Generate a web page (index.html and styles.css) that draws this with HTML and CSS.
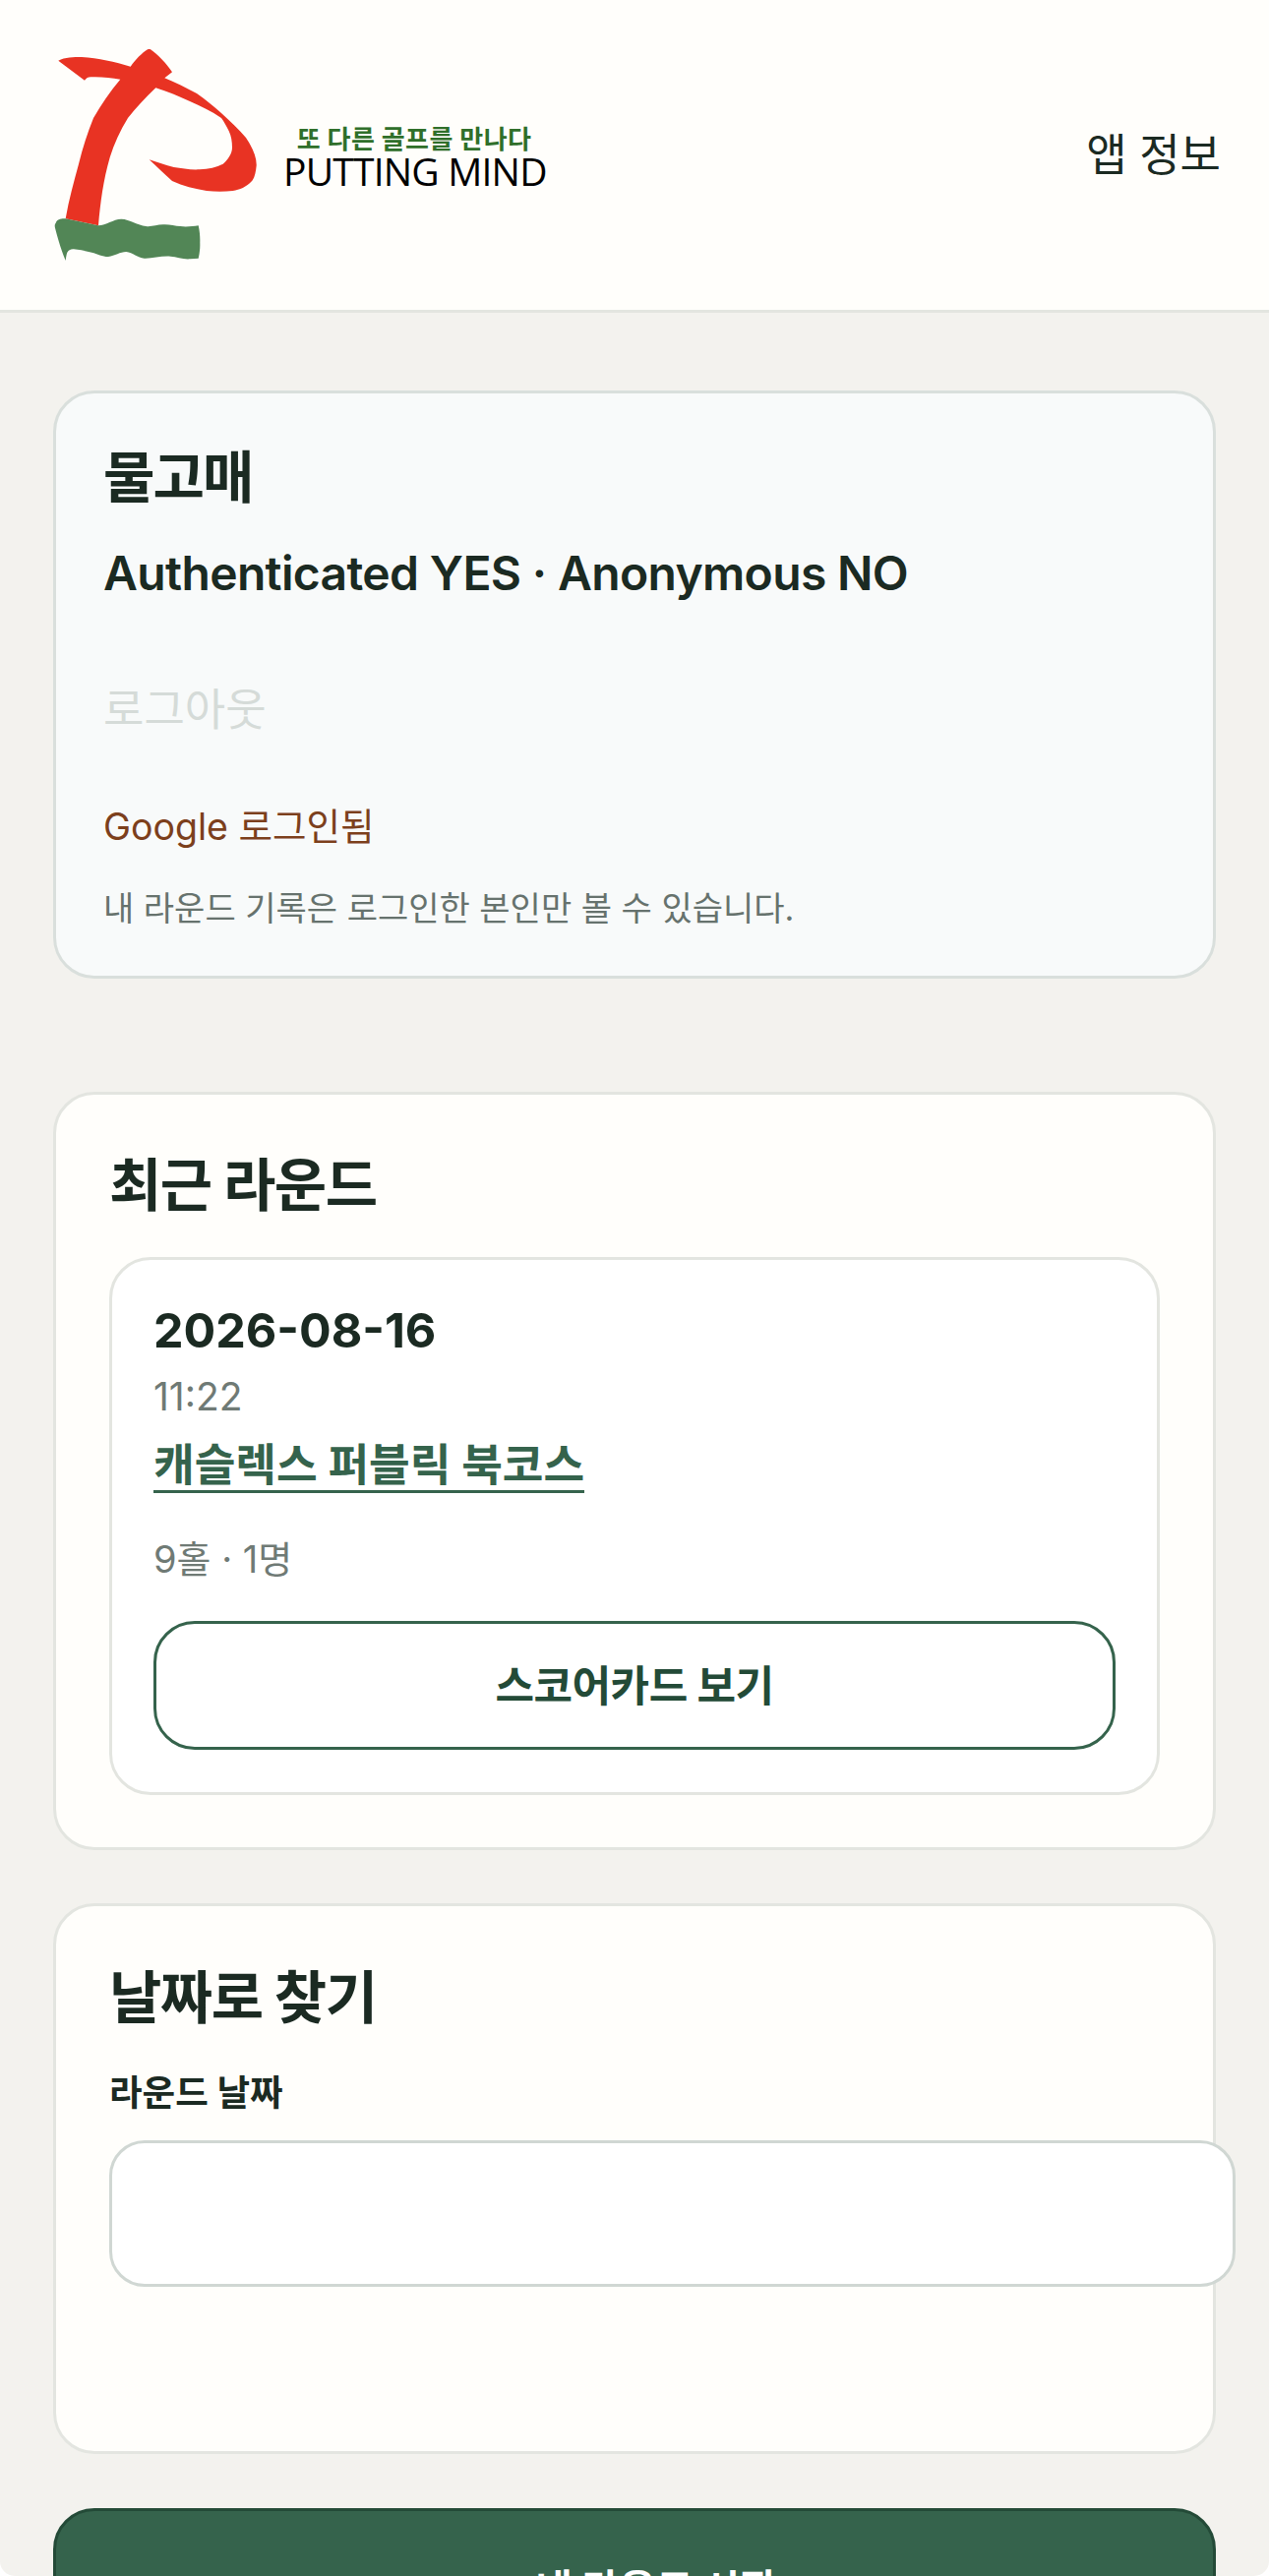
FILE: index.html
```html
<!DOCTYPE html>
<html lang="ko">
<head>
  <meta charset="UTF-8" />
  <meta name="viewport" content="width=device-width, initial-scale=1.0"/>
  <title>Putting Mind</title>
  <link rel="stylesheet" href="styles.css">
</head>
<body>
  <div class="page">
    <header class="top-bar">
      <div class="brand">
        <svg class="brand-mark" width="210" height="220" viewBox="55 50 210 220">
          <path fill="#e83323" d="M59.3 61.7 C66 58 75 58 83 58 C100 59 117 63 132.7 67.7 C138 60 145 53 151.7 49.3 C160 55 169 64 175 73.3 L167.3 79.3 C178 84 189 89 200 95 C209 101 217 108 225 115 C234 123 243 132 250 140 C256 149 261 159 260.7 168.3 C260 175 259 180 256.7 183.3 C251 190 244 193 236.7 194 C228 195 219 195 210 194 C198 192 186 189 175 184 C167 177 159 169 151.7 162.3 C160 165 168 168 176.7 170 C185 171 194 173 203 172.3 C212 172 220 170 226.7 166.7 C232 162 236 156 236 150 C236 144 235 138 232.7 133.3 C230 128 228 124 225 120 C215 113 204 108 193 103 C182 98 170 93 158.3 89.3 C148 99 138 110 130 120 C122 133 116 146 111.7 160 C105 183 102 206 100 229.3 L66.7 222.3 C70 203 75 185 80 166.7 C84 150 89 135 95 120 C103 106 112 93 122.3 80.7 C113 79 103 78 93.3 78.3 C90 78 88 79 86 81.7 Z"/>
          <path fill="#528656" d="M66.7 222.3 C62 222 58 223 56.7 226.7 C55.500 228 55.500 230 56 231.7 C59 243 62 254 66.7 265 C67 262 67.500 259 68.3 256.700 C70 254 72 253 75 253.3 C81 254 87 255 93.3 256.7 C99 258 104 261 110 261 C117 260 122 256 128.3 256 C135 257 140 262 146.7 262.7 C155 263 164 260 173.3 260.7 C180 261 186 264 193.3 263.3 L201.7 262.7 C203 257 203.500 252 203.3 246.7 C203.500 241 203 235 201.7 229.3 C196 230 189 231 183.3 230 C178 230 172 228 166.7 228.3 C160 228 154 231 148.3 230 C140 229 132 223 123.3 222.700 C115 223 108 229 100 229.3 Z"/>
        </svg>
        <div class="brand-text">
          <div class="brand-slogan">또 다른 골프를 만나다</div>
          <div class="brand-name">PUTTING MIND</div>
        </div>
      </div>
      <a class="top-link">앱 정보</a>
    </header>

    <main class="content">
      <section class="card account-card">
        <h2 class="account-name">물고매</h2>
        <div class="account-state">Authenticated YES · Anonymous NO</div>
        <div class="logout">로그아웃</div>
        <div class="login-status">Google 로그인됨</div>
        <div class="note">내 라운드 기록은 로그인한 본인만 볼 수 있습니다.</div>
      </section>

      <section class="card recent-card">
        <h2 class="card-title">최근 라운드</h2>
        <div class="round">
          <div class="round-date">2026-08-16</div>
          <div class="round-time">11:22</div>
          <a class="round-course">캐슬렉스 퍼블릭 북코스</a>
          <div class="round-meta">9홀 · 1명</div>
          <button class="btn-outline">스코어카드 보기</button>
        </div>
      </section>

      <section class="card search-card">
        <h2 class="card-title">날짜로 찾기</h2>
        <label class="field-label">라운드 날짜</label>
        <input class="date-input" type="text">
      </section>

      <button class="btn-primary">내 라운드 시작</button>
    </main>
  </div>
</body>
</html>
```

FILE: styles.css
```css
html { background: #fff; }
body { margin: 0; height: 2619px; overflow: hidden; font-family: Inter, "Noto Sans CJK KR", sans-serif; color: #1b2a22; }
.page {
  height: 2619px;
  background: #f3f2ee;
  border-radius: 0 0 15px 15px;
  overflow: hidden;
}

.top-bar {
  height: 318px;
  box-sizing: border-box;
  background: #fffefb;
  border-bottom: 3px solid #e3e5e0;
  padding: 50px 49px 0 55px;
  display: flex;
  justify-content: space-between;
}
.brand { display: flex; }
.brand-mark { display: block; }
.brand-text { margin: 77px 0 0 23px; width: 266px; text-align: center; }
.brand-slogan { font-size: 26px; line-height: 30px; font-weight: 700; color: #2f6f2a; letter-spacing: 0.4px; }
.brand-name { font-family: "Open Sans", sans-serif; font-size: 39px; line-height: 33px; color: #000; letter-spacing: -0.8px; white-space: nowrap; }
.top-link { font-size: 45px; line-height: 56px; margin-top: 80px; }

.content { padding: 79px 54px 0; }
.card {
  box-sizing: border-box;
  background: #fffefb;
  border: 3px solid #e3e5e0;
  border-radius: 42px;
}
.account-card {
  height: 598px;
  background: #f8fafa;
  border-color: #d9dfdc;
  padding: 50px 48px;
  margin-bottom: 115px;
}
.account-name { margin: 0; font-size: 57px; line-height: 72px; font-weight: 700; letter-spacing: -2px; }
.account-state { margin-top: 32px; font-size: 48px; line-height: 58px; font-weight: 600; letter-spacing: -0.65px; }
.logout { margin-top: 81px; font-size: 45px; line-height: 58px; color: #d5dbd8; }
.login-status { margin-top: 65px; font-size: 37.5px; line-height: 50px; color: #7c3f1c; }
.note { margin-top: 35px; font-size: 34px; line-height: 46px; color: #66726d; }

.recent-card { height: 771px; padding: 56px 54px; margin-bottom: 54px; }
.search-card { height: 560px; padding: 57px 54px; margin-bottom: 55px; }
.card-title { margin: 0; font-size: 58px; line-height: 72px; font-weight: 700; letter-spacing: -1.5px; }

.round {
  box-sizing: border-box;
  height: 547px;
  margin-top: 37px;
  background: #fff;
  border: 3px solid #e3e5e0;
  border-radius: 42px;
  padding: 42px 42px;
}
.round-date { font-size: 48.5px; line-height: 60px; font-weight: 700; }
.round-time { margin-top: 13px; font-size: 39px; line-height: 48px; color: #6f7a75; }
.round-course {
  display: table;
  margin-top: 20px;
  font-size: 45.3px;
  line-height: 51px;
  font-weight: 700;
  color: #35634c;
  border-bottom: 3px solid #35634c;
}
.round-meta { margin-top: 43px; font-size: 38px; line-height: 48px; color: #6f7a75; }
.btn-outline {
  display: block;
  width: 100%;
  height: 131px;
  margin-top: 39px;
  padding: 0 0 6px;
  background: #fff;
  border: 3px solid #35634c;
  border-radius: 42px;
  font-family: inherit;
  font-size: 43px;
  font-weight: 700;
  letter-spacing: -0.5px;
  color: #234a37;
}

.field-label { display: block; margin-top: 37px; font-size: 36.5px; line-height: 48px; font-weight: 700; }
.date-input {
  display: block;
  box-sizing: border-box;
  width: 1145px;
  height: 149px;
  margin-top: 24px;
  background: #fff;
  border: 3px solid #d0d7d3;
  border-radius: 36px;
}

.btn-primary {
  display: block;
  box-sizing: border-box;
  width: 100%;
  height: 170px;
  padding: 0 0 12px 44px;
  background: #35634c;
  border: 3px solid #234a37;
  border-radius: 42px;
  font-family: inherit;
  font-size: 41px;
  font-weight: 700;
  color: #fff;
}
```
